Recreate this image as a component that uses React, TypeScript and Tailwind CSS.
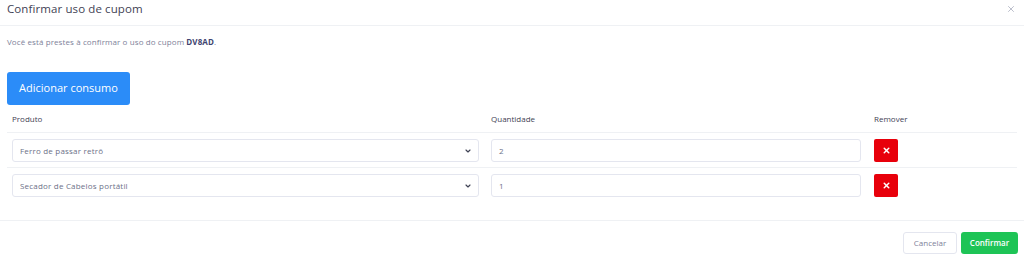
import { ChevronDown, X } from 'lucide-react';

const rows = [
    { produto: 'Ferro de passar retrô', qtd: '2' },
    { produto: 'Secador de Cabelos portátil', qtd: '1' },
];

export default function App() {
    return (
        <div className="w-[1024px] h-[261px] bg-white flex flex-col font-['Open_Sans',sans-serif] overflow-hidden">
            {/* Header */}
            <div className="h-[26px] flex items-start justify-between border-b border-[#eff1f4] pl-[7px] pr-[8px]">
                <h2 className="text-[11.5px] leading-[18px] text-[#3f4254] font-medium tracking-[0.1px]">Confirmar uso de cupom</h2>
                <button className="mt-[4px] text-[#a1a5b7]">
                    <X className="w-[10px] h-[10px]" strokeWidth={1.75} />
                </button>
            </div>

            {/* Body */}
            <div className="flex flex-col px-[7px] h-[195px] border-b border-[#eff1f4]">
                <p className="mt-[11px] text-[8px] leading-[10px] text-[#7e8299] tracking-[0.1px]">
                    Você está prestes à confirmar o uso do cupom <span className="font-bold text-[#3f4470]">DV8AD</span>.
                </p>

                <button className="mt-[25px] w-[123px] h-[33px] rounded-[3px] bg-[#2b8cf8] text-white text-[11px] font-medium">
                    Adicionar consumo
                </button>

                <div className="grid grid-cols-[479px_383px_1fr] text-[8px] text-[#3f4254] h-[28px] items-center border-b border-[#eff1f4]">
                    <div className="pl-[5px]">Produto</div>
                    <div className="pl-[5px]">Quantidade</div>
                    <div className="pl-[5px]">Remover</div>
                </div>

                {rows.map((r, i) => (
                    <div
                        key={i}
                        className={
                            'grid grid-cols-[479px_383px_1fr] items-start pt-[6px] h-[35px] ' +
                            (i < rows.length - 1 ? 'border-b border-[#eff1f4]' : '')
                        }
                    >
                        <div className="pl-[5px] pr-[7px]">
                            <div className="h-[23px] border border-[#e4e6ef] rounded-[3px] flex items-center justify-between pl-[7px] pr-[6px] text-[8px] text-[#6c7088] tracking-[0.2px]">
                                <span>{r.produto}</span>
                                <ChevronDown className="w-[8px] h-[8px] text-[#3f4254]" strokeWidth={3.5} />
                            </div>
                        </div>
                        <div className="pl-[5px] pr-[8px]">
                            <div className="h-[23px] border border-[#e4e6ef] rounded-[3px] flex items-center pl-[7px] text-[8px] text-[#6c7088]">
                                {r.qtd}
                            </div>
                        </div>
                        <div className="pl-[5px]">
                            <button className="w-[24px] h-[23px] rounded-[2px] bg-[#e8000b] flex items-center justify-center">
                                <X className="w-[9px] h-[9px] text-white" strokeWidth={4} />
                            </button>
                        </div>
                    </div>
                ))}
            </div>

            {/* Footer */}
            <div className="flex justify-end items-start gap-[4px] pt-[11px] pr-[6px]">
                <button className="w-[54px] h-[22px] rounded-[3px] border border-[#e4e6ef] text-[8px] text-[#7e8299] bg-white">
                    Cancelar
                </button>
                <button className="w-[57px] h-[22px] rounded-[3px] bg-[#1ec456] text-[8px] font-semibold text-white">
                    Confirmar
                </button>
            </div>
        </div>
    );
}
